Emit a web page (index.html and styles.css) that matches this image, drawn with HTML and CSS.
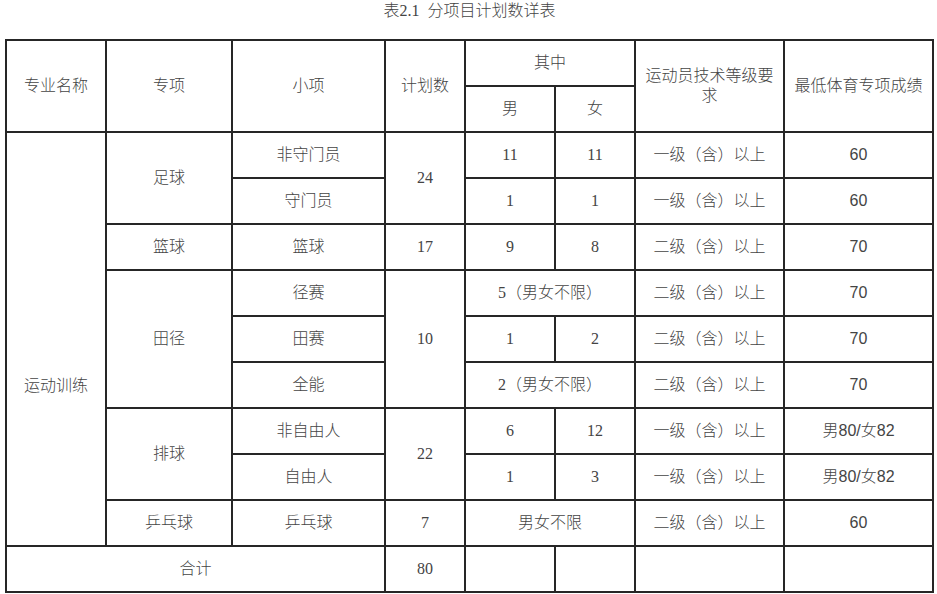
FILE: index.html
```html
<!DOCTYPE html>
<html lang="zh">
<head>
<meta charset="utf-8">
<title>表2.1 分项目计划数详表</title>
<link rel="stylesheet" href="styles.css">
</head>
<body>
<div class="page">
  <div class="caption">表2.1&nbsp; 分项目计划数详表</div>
  <table class="plan">
    <colgroup>
      <col class="c1"><col class="c2"><col class="c3"><col class="c4"><col class="c5"><col class="c6"><col class="c7"><col class="c8">
    </colgroup>
    <thead>
      <tr>
        <th rowspan="2">专业名称</th>
        <th rowspan="2">专项</th>
        <th rowspan="2">小项</th>
        <th rowspan="2">计划数</th>
        <th colspan="2">其中</th>
        <th rowspan="2">运动员技术等级要求</th>
        <th rowspan="2">最低体育专项成绩</th>
      </tr>
      <tr>
        <th>男</th>
        <th>女</th>
      </tr>
    </thead>
    <tbody>
      <tr>
        <td rowspan="9" class="major">运动训练</td>
        <td rowspan="2">足球</td>
        <td>非守门员</td>
        <td rowspan="2">24</td>
        <td>11</td><td>11</td>
        <td>一级（含）以上</td>
        <td class="score">60</td>
      </tr>
      <tr>
        <td>守门员</td>
        <td>1</td><td>1</td>
        <td>一级（含）以上</td>
        <td class="score">60</td>
      </tr>
      <tr>
        <td>篮球</td>
        <td>篮球</td>
        <td>17</td>
        <td>9</td><td>8</td>
        <td>二级（含）以上</td>
        <td class="score">70</td>
      </tr>
      <tr>
        <td rowspan="3">田径</td>
        <td>径赛</td>
        <td rowspan="3">10</td>
        <td colspan="2">5（男女不限）</td>
        <td>二级（含）以上</td>
        <td class="score">70</td>
      </tr>
      <tr>
        <td>田赛</td>
        <td>1</td><td>2</td>
        <td>二级（含）以上</td>
        <td class="score">70</td>
      </tr>
      <tr>
        <td>全能</td>
        <td colspan="2">2（男女不限）</td>
        <td>二级（含）以上</td>
        <td class="score">70</td>
      </tr>
      <tr>
        <td rowspan="2">排球</td>
        <td>非自由人</td>
        <td rowspan="2">22</td>
        <td>6</td><td>12</td>
        <td>一级（含）以上</td>
        <td class="score">男80/女82</td>
      </tr>
      <tr>
        <td>自由人</td>
        <td>1</td><td>3</td>
        <td>一级（含）以上</td>
        <td class="score">男80/女82</td>
      </tr>
      <tr>
        <td>乒乓球</td>
        <td>乒乓球</td>
        <td>7</td>
        <td colspan="2">男女不限</td>
        <td>二级（含）以上</td>
        <td class="score">60</td>
      </tr>
      <tr>
        <td colspan="3">合计</td>
        <td>80</td>
        <td></td><td></td><td></td><td></td>
      </tr>
    </tbody>
  </table>
</div>
</body>
</html>
```
FILE: styles.css
```css
html, body {
  margin: 0;
  padding: 0;
  background: #ffffff;
}

.page {
  padding: 0 0 0 5px;
  width: 929px;
  font-family: "Liberation Serif", "Noto Sans CJK SC", serif;
  font-size: 16px;
  font-weight: 300;
  color: #444444;
}

.caption {
  height: 22px;
  line-height: 22px;
  text-align: center;
  margin-bottom: 17px;
  font-size: 16px;
}

.plan {
  width: 929px;
  table-layout: fixed;
  border-collapse: separate;
  border-spacing: 0;
  border-top: 2px solid #262626;
  border-left: 2px solid #262626;
}

.c1 { width: 100px; }
.c2 { width: 126px; }
.c3 { width: 153px; }
.c4 { width: 80px; }
.c5 { width: 90px; }
.c6 { width: 80px; }
.c7 { width: 149px; }
.c8 { width: 149px; }

.plan tr {
  height: 46px;
}

.plan th,
.plan td {
  box-sizing: border-box;
  border-right: 2px solid #262626;
  border-bottom: 2px solid #262626;
  padding: 0 8px;
  text-align: center;
  vertical-align: middle;
  font-weight: 300;
  line-height: 20px;
}

.plan .major {
  padding-top: 94px;
}

.plan .score {
  font-family: "Liberation Sans", "Noto Sans CJK SC", sans-serif;
}
```
